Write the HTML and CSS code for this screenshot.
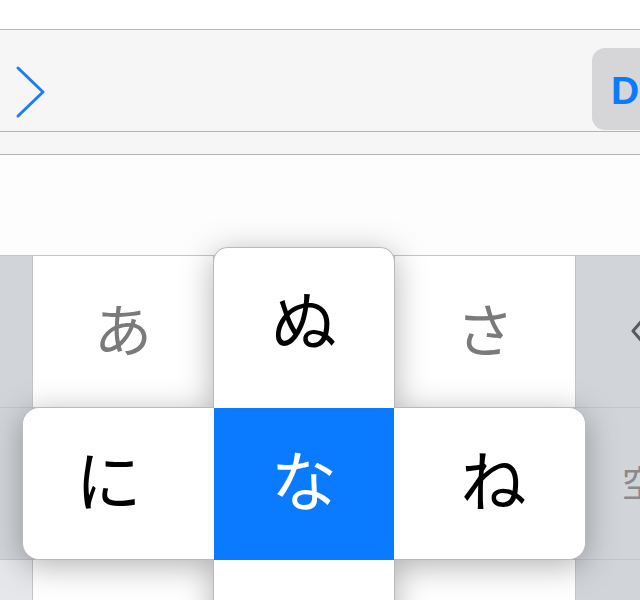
FILE: index.html
```html
<!DOCTYPE html>
<html lang="ja">
<head>
<meta charset="utf-8">
<title>Flick keyboard</title>
<link rel="stylesheet" href="styles.css">
</head>
<body>
<div class="screen">
  <div class="topspace"></div>
  <div class="toolbar">
    <svg class="chev" width="32" height="54" viewBox="0 0 32 54"><polyline points="3,3 28,27 3,51"/></svg>
    <div class="dbtn"><span>D</span></div>
  </div>
  <div class="band"></div>
  <div class="blank"></div>
  <div class="kb">
    <div class="side"></div>
    <div class="key"><span class="lbl">あ</span></div>
    <div class="key"><span class="lbl">か</span></div>
    <div class="key"><span class="lbl">さ</span></div>
    <div class="side right">
      <svg class="del" width="44" height="32" viewBox="0 0 44 32"><path d="M14 2 H40 a2 2 0 0 1 2 2 V28 a2 2 0 0 1 -2 2 H14 L2 16 Z"/></svg>
    </div>

    <div class="side"></div>
    <div class="key"><span class="lbl">た</span></div>
    <div class="key"><span class="lbl">な</span></div>
    <div class="key"><span class="lbl">は</span></div>
    <div class="side right"><span class="space">空白</span></div>

    <div class="side light"></div>
    <div class="key"></div>
    <div class="key"></div>
    <div class="key"></div>
    <div class="side"></div>

    <div class="popup">
      <div class="pcol"><div class="ptop">ぬ</div></div>
      <div class="prow">
        <div class="flap left">に</div>
        <div class="pcenter">な</div>
        <div class="flap right">ね</div>
      </div>
    </div>
  </div>
</div>
</body>
</html>
```
FILE: styles.css
```css
html, body {
  margin: 0;
  padding: 0;
  background: #fff;
}
.screen {
  width: 640px;
  height: 600px;
  overflow: hidden;
  font-family: "Noto Sans CJK JP", "Noto Sans", sans-serif;
}
.topspace {
  height: 29px;
  background: #fff;
}
.toolbar {
  height: 101px;
  background: #f6f6f6;
  border-top: 1px solid #b4b4b6;
  border-bottom: 1px solid #b4b4b6;
  display: flex;
  align-items: flex-start;
  position: relative;
}
.chev {
  margin: 35px 0 0 15px;
  fill: none;
  stroke: #1b7ef2;
  stroke-width: 3;
  stroke-linecap: round;
  stroke-linejoin: round;
}
.dbtn {
  margin-left: auto;
  margin-top: 18px;
  width: 90px;
  height: 82px;
  margin-right: -42px;
  background: #d6d6d8;
  border-radius: 13px;
  display: flex;
  align-items: center;
}
.dbtn span {
  font-family: "Liberation Sans", Arial, sans-serif;
  font-weight: bold;
  font-size: 39px;
  color: #0a7aff;
  margin-left: 19px;
  margin-top: 4px;
}
.band {
  height: 22px;
  background: #f6f6f6;
  border-bottom: 1px solid #b4b4b6;
}
.blank {
  height: 100px;
  background: #fdfdfd;
}
.kb {
  position: relative;
  display: grid;
  grid-template-columns: 32px 180px 180px 180px 1fr;
  grid-auto-rows: 151px;
  gap: 1px;
  background: #c3c5c9;
  border-top: 1px solid #c3c5c9;
}
.side {
  background: #d1d4d9;
  position: relative;
}
.side.light {
  background: #e5e7eb;
}
.key {
  background: #fff;
  display: flex;
  align-items: center;
  justify-content: center;
}
.lbl {
  font-size: 58px;
  color: #7a7a7a;
  line-height: 1;
  margin-top: -10px;
}
.side.right {
  display: flex;
  align-items: center;
}
.del {
  margin-left: 55px;
  margin-top: -2px;
  fill: none;
  stroke: #5a5a5e;
  stroke-width: 3;
  stroke-linejoin: round;
}
.space {
  margin-left: 46px;
  font-size: 36px;
  color: #8a8a8e;
  white-space: nowrap;
  margin-top: -6px;
}
.popup {
  position: absolute;
  inset: 0;
  filter: drop-shadow(0 6px 16px rgba(0, 0, 0, 0.3));
}
.pcol {
  position: absolute;
  left: 213px;
  top: -9px;
  width: 182px;
  height: 420px;
  box-sizing: border-box;
  background: #fff;
  border: 1px solid #b9b9bb;
  border-bottom: none;
  border-radius: 15px 15px 0 0;
}
.ptop {
  height: 160px;
  display: flex;
  align-items: center;
  justify-content: center;
  font-size: 66px;
  line-height: 1;
  color: #000;
  padding-bottom: 22px;
  box-sizing: border-box;
}
.prow {
  position: absolute;
  left: 22px;
  top: 151px;
  width: 564px;
  height: 153px;
  display: flex;
}
.flap {
  flex: 0 0 192px;
  box-sizing: border-box;
  background: #fff;
  border: 1px solid #b9b9bb;
  display: flex;
  align-items: center;
  justify-content: center;
  font-size: 66px;
  line-height: 1;
  color: #000;
  padding-bottom: 14px;
}
.flap.left {
  border-right: none;
  border-radius: 17px 0 0 17px;
  padding-right: 20px;
}
.flap.right {
  border-left: none;
  border-radius: 0 17px 17px 0;
  padding-left: 8px;
}
.pcenter {
  flex: 0 0 180px;
  background: #0a7aff;
  color: #fff;
  display: flex;
  align-items: center;
  justify-content: center;
  font-size: 66px;
  line-height: 1;
  padding-bottom: 14px;
  box-sizing: border-box;
  margin-top: 1px;
}
```
